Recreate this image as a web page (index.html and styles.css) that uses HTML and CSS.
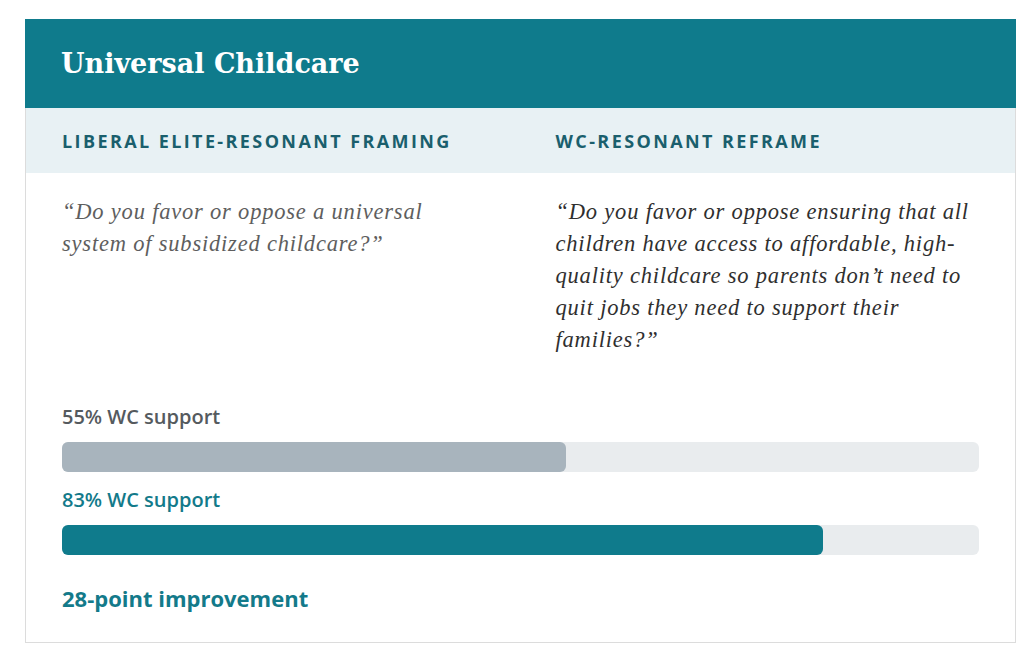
FILE: index.html
```html
<!DOCTYPE html>
<html lang="en">
<head>
<meta charset="utf-8">
<title>Universal Childcare</title>
<link rel="stylesheet" href="styles.css">
</head>
<body>
<section class="card">
  <header class="card-head">
    <h1 class="title">Universal Childcare</h1>
  </header>
  <div class="cols cols-labels">
    <div class="col-label">Liberal Elite-Resonant Framing</div>
    <div class="col-label">WC-Resonant Reframe</div>
  </div>
  <div class="cols cols-quotes">
    <p class="quote quote-old">“Do you favor or oppose a universal system of subsidized childcare?”</p>
    <p class="quote quote-new">“Do you favor or oppose ensuring that all children have access to affordable, high-quality childcare so parents don’t need to quit jobs they need to support their families?”</p>
  </div>
  <div class="stats">
    <div class="stat-label stat-old">55% WC support</div>
    <div class="track"><div class="fill fill-old" style="width:55%"></div></div>
    <div class="stat-label stat-new">83% WC support</div>
    <div class="track"><div class="fill fill-new" style="width:83%"></div></div>
    <div class="improvement">28-point improvement</div>
  </div>
</section>
</body>
</html>
```
FILE: styles.css
```css
html, body {
  margin: 0;
  padding: 0;
  background: #ffffff;
}

body {
  padding: 19px 0 0 25px;
}

.card {
  width: 989px;
  border: 1px solid #dcdcdc;
  border-top: none;
  background: #fff;
}

.card-head {
  background: #0f7b8c;
  height: 89px;
  display: flex;
  align-items: center;
  padding: 0 36px;
  margin: 0 -1px;
}

.title {
  margin: 0;
  font-family: "DejaVu Serif", Georgia, serif;
  font-weight: 700;
  font-size: 27px;
  color: #ffffff;
  letter-spacing: 0;
}

.cols {
  display: grid;
  grid-template-columns: 1fr 1fr;
  column-gap: 70px;
  padding: 0 36px;
}

.cols-labels {
  background: #e8f1f4;
  height: 65px;
  align-items: center;
}

.col-label {
  font-family: "Open Sans", "Noto Sans", sans-serif;
  font-weight: 700;
  font-size: 18px;
  letter-spacing: 2.4px;
  text-transform: uppercase;
  color: #1a5f6d;
}

.cols-quotes {
  padding-top: 23px;
}

.quote {
  margin: 0;
  font-family: "Liberation Serif", "Times New Roman", serif;
  font-style: italic;
  font-size: 22.5px;
  letter-spacing: 0.8px;
  line-height: 32px;
}

.quote-old {
  color: #5e5e5e;
}

.quote-new {
  color: #2f2f2f;
}

.stats {
  padding: 48px 36px 30px;
  font-family: "Open Sans", "Noto Sans", sans-serif;
}

.stat-label {
  font-weight: 600;
  font-size: 20px;
  line-height: 26px;
}

.stat-old {
  color: #555a5e;
}

.stat-new {
  color: #137a8a;
  margin-top: 15px;
}

.track {
  margin-top: 12px;
  height: 30px;
  background: #e9ecee;
  border-radius: 6px;
}

.fill {
  height: 100%;
  border-radius: 6px;
}

.fill-old {
  background: #a8b4bd;
}

.fill-new {
  background: #0f7b8c;
}

.improvement {
  margin-top: 29px;
  font-weight: 700;
  font-size: 22px;
  line-height: 28px;
  color: #137a8a;
}
```
